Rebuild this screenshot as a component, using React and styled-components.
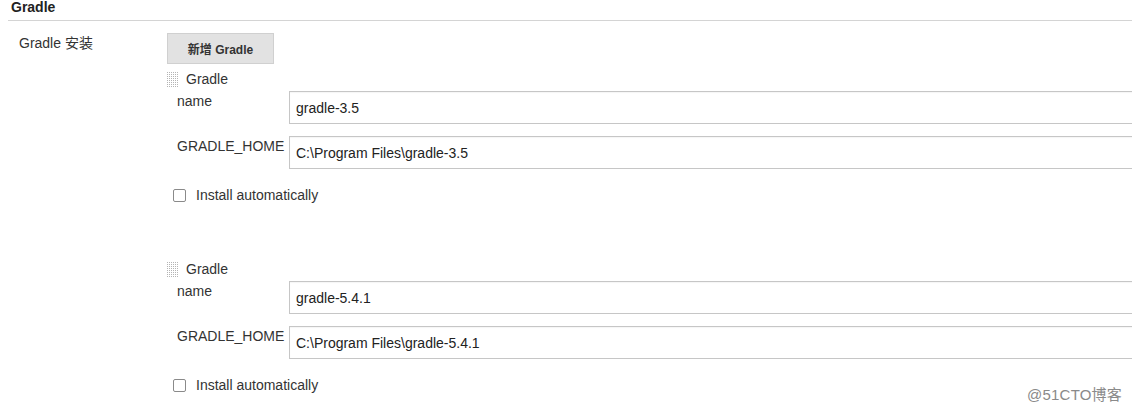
import React from 'react'
import styled, { createGlobalStyle } from 'styled-components'

const GlobalStyle = createGlobalStyle`
  html, body {
    margin: 0;
    padding: 0;
    background: #fff;
  }
  body {
    font-family: 'Liberation Sans', Arial, 'Noto Sans CJK SC', sans-serif;
    font-size: 14px;
    color: #333;
    overflow: hidden;
  }
`

const Page = styled.div`
  width: 1132px;
  height: 412px;
  position: relative;
  overflow: hidden;
`

const SectionHeader = styled.div`
  margin-left: 8px;
  padding: 0 0 0 3px;
  height: 20px;
  line-height: 15px;
  font-weight: bold;
  font-size: 14px;
  color: #222;
  border-bottom: 1px solid #d4d4d4;
`

const SettingRow = styled.div`
  display: flex;
  padding-top: 12px;
`

const SettingLabel = styled.div`
  width: 148px;
  padding-left: 19px;
  padding-top: 2px;
  line-height: 16px;
`

const SettingBody = styled.div`
  flex: 1;
  display: flex;
  flex-direction: column;
  align-items: flex-start;
`

const AddButton = styled.button`
  width: 107px;
  height: 31px;
  padding: 0 0 1px;
  border: 1px solid #d0d0d0;
  background: #e2e2e2;
  color: #333;
  font-family: inherit;
  font-size: 12px;
  font-weight: bold;
  cursor: pointer;
`

const Installation = styled.div`
  width: 100%;
  display: flex;
  flex-direction: column;
  margin-top: ${(props) => props.$gap}px;
`

const HandleRow = styled.div`
  display: flex;
  align-items: center;
  height: 16px;
  gap: 8px;
`

const FieldRow = styled.div`
  display: flex;
  align-items: flex-start;
  padding-left: 10px;
  margin-top: ${(props) => props.$top}px;
`

const FieldLabel = styled.label`
  width: 112px;
  padding-top: 2px;
  line-height: 16px;
`

const TextInput = styled.input`
  flex: 1;
  margin-right: -20px;
  height: 33px;
  box-sizing: border-box;
  padding: 0 6px;
  border: 1px solid #c6c6c6;
  box-shadow: inset 0 1px 1px rgba(0, 0, 0, 0.04);
  font-family: inherit;
  font-size: 14px;
  color: #222;
  outline: none;
`

const CheckRow = styled.label`
  display: flex;
  align-items: center;
  gap: 10px;
  padding-left: 6px;
  margin-top: 18px;
  line-height: 16px;
`

const Box = styled.input`
  appearance: none;
  margin: 0;
  width: 13px;
  height: 13px;
  border: 1px solid #8a8a8a;
  border-radius: 2px;
  background: #fff;
`

const Watermark = styled.div`
  position: absolute;
  right: 10px;
  bottom: 8px;
  font-size: 15px;
  color: #8a8a8a;
  letter-spacing: 0.2px;
`

// dotted grip used to reorder installations
function DragHandle() {
  const dots = []
  for (let y = 0; y < 8; y++) {
    for (let x = 0; x < 6; x++) {
      dots.push(<rect key={`${x}-${y}`} x={x * 2} y={y * 2} width="1" height="1" fill="#b4b4b4" />)
    }
  }
  return (
    <svg width="11" height="15" viewBox="0 0 11 15" style={{ cursor: 'move' }}>
      {dots}
    </svg>
  )
}

const installs = [
  { id: 1, name: 'gradle-3.5', home: 'C:\\Program Files\\gradle-3.5' },
  { id: 2, name: 'gradle-5.4.1', home: 'C:\\Program Files\\gradle-5.4.1' },
]

function GradleInstall({ name, home, gap }) {
  return (
    <Installation $gap={gap}>
      <HandleRow>
        <DragHandle />
        <span>Gradle</span>
      </HandleRow>
      <FieldRow $top={4}>
        <FieldLabel>name</FieldLabel>
        <TextInput defaultValue={name} />
      </FieldRow>
      <FieldRow $top={12}>
        <FieldLabel>GRADLE_HOME</FieldLabel>
        <TextInput defaultValue={home} />
      </FieldRow>
      <CheckRow>
        <Box type="checkbox" />
        Install automatically
      </CheckRow>
    </Installation>
  )
}

export default function App() {
  return (
    <Page>
      <GlobalStyle />
      <SectionHeader>Gradle</SectionHeader>
      <SettingRow>
        <SettingLabel>Gradle 安装</SettingLabel>
        <SettingBody>
          <AddButton>新增 Gradle</AddButton>
          {installs.map((item, i) => (
            <GradleInstall key={item.id} name={item.name} home={item.home} gap={i === 0 ? 7 : 58} />
          ))}
        </SettingBody>
      </SettingRow>
      <Watermark>@51CTO博客</Watermark>
    </Page>
  )
}
